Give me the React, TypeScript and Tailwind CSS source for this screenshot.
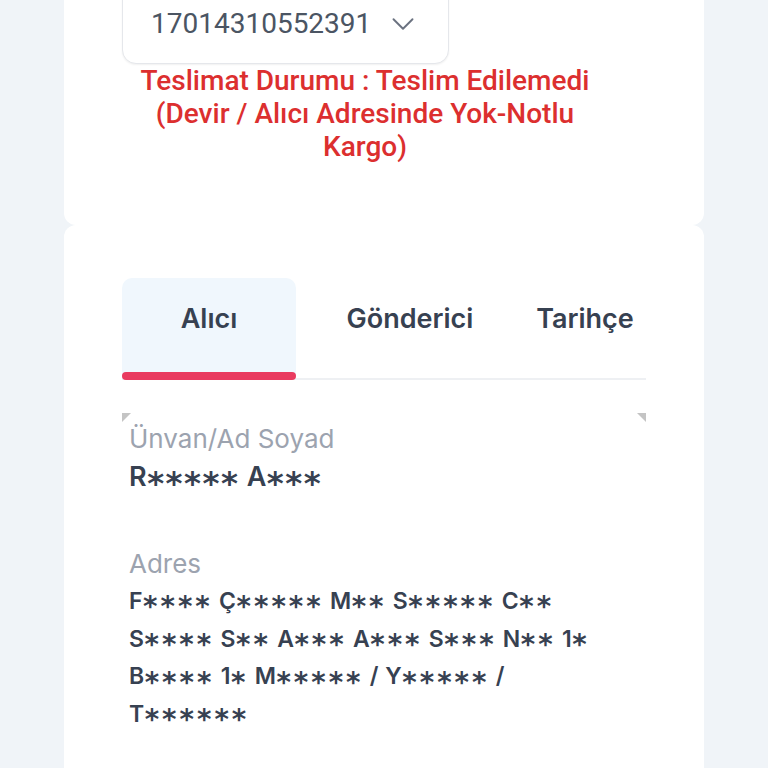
import { ChevronDown } from "lucide-react";

const tabs = [
  { label: "Alıcı", width: "w-[174px]", active: true },
  { label: "Gönderici", width: "w-[228px]", active: false },
  { label: "Tarihçe", width: "flex-1", active: false },
];

// masked values: asterisk runs get the wide, centred star of the app font
function Masked({ text, spacing }: { text: string; spacing: string }) {
  return (
    <>
      {text.split(/(\*+)/).map((part, i) =>
        part.startsWith("*") ? (
          <span key={i} className={`relative top-[0.26em] font-['DejaVu_Sans',sans-serif] text-[1.2em] leading-none ${spacing}`}>
            {part}
          </span>
        ) : (
          part
        )
      )}
    </>
  );
}

export default function App() {
  return (
    <div className="min-h-[768px] overflow-hidden bg-[#f0f4f8] font-['Inter',sans-serif]">
      <div className="mx-16 flex flex-col">
        {/* shipment header */}
        <section className="h-[225px] rounded-b-[12px] bg-white pl-[58px]">
          <div className="-mt-[20px] flex h-[84px] w-[327px] items-center gap-[13px] rounded-[14px] border border-[#e5e7eb] bg-white pl-[28px] pt-[3px] shadow-[0_1px_2px_rgba(0,0,0,0.06)]">
            <span className="font-['Roboto',sans-serif] text-[28px] text-[#4b5563]">17014310552391</span>
            <ChevronDown className="h-[38px] w-[38px] text-[#6b7280]" strokeWidth={1.2} />
          </div>
          <p className="w-[486px] text-center font-['Roboto',sans-serif] text-[28px] font-medium leading-[33px] text-[#dc2f2f]">
            Teslimat Durumu : Teslim Edilemedi (Devir / Alıcı Adresinde Yok-Notlu Kargo)
          </p>
        </section>

        {/* detail card */}
        <section className="min-h-[543px] rounded-t-[12px] bg-white px-[58px] pt-[53px]">
          <div className="flex border-b-2 border-[#eef0f3]">
            {tabs.map((tab) => (
              <div
                key={tab.label}
                className={`relative flex h-[100px] items-center justify-center rounded-t-[10px] pb-[18px] text-[27px] font-semibold text-[#374151] ${tab.width} ${
                  tab.active ? "bg-[#f0f7fd]" : ""
                }`}
              >
                {tab.label}
                {tab.active && (
                  <span className="absolute -bottom-[2px] left-0 right-0 h-[8px] rounded-full bg-[#e93a5f]" />
                )}
              </div>
            ))}
          </div>

          <div className="relative mt-[33px] w-[524px] bg-white pl-[7px] pr-[30px] pt-[7px] text-[#374151]">
            <span className="absolute left-0 top-0 h-0 w-0 border-r-[9px] border-t-[9px] border-r-transparent border-t-[#c4c4c4]" />
            <span className="absolute right-0 top-0 h-0 w-0 border-l-[9px] border-t-[9px] border-l-transparent border-t-[#c4c4c4]" />
            <div className="text-[26px] leading-[38px] text-[#9ca3af]">Ünvan/Ad Soyad</div>
            <div className="text-[27px] font-semibold leading-[38px] tracking-[0.5px]">
              <Masked text="R***** A***" spacing="tracking-[1.5px]" />
            </div>
            <div className="mt-[49px] text-[26px] leading-[38px] text-[#9ca3af]">Adres</div>
            <div className="text-[23px] font-semibold leading-[37.7px] tracking-[0.5px]">
              <Masked
                text="F**** Ç***** M** S***** C** S**** S** A*** A*** S*** N** 1* B**** 1* M***** / Y***** / T******"
                spacing="tracking-[3px]"
              />
            </div>
          </div>
        </section>
      </div>
    </div>
  );
}
